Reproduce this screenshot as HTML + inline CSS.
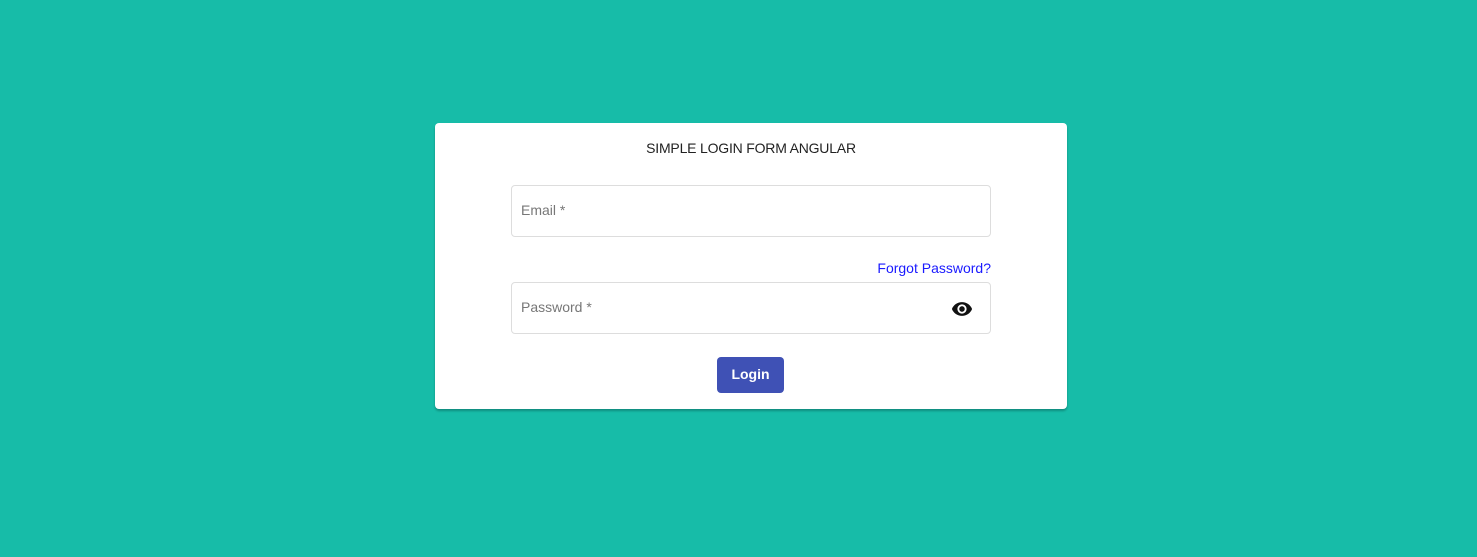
<!DOCTYPE html>
<html><head><style>
html,body{margin:0;padding:0;width:1477px;height:557px;background:#17bca8;font-family:"Liberation Sans",sans-serif;overflow:hidden}
.card{position:absolute;left:435px;top:123px;width:632px;height:286px;background:#fff;border-radius:4px;box-shadow:0 2px 2px rgba(0,0,0,.25)}
.title{position:absolute;top:17px;left:0;width:100%;text-align:center;font-size:14px;color:#222;letter-spacing:-0.2px}
.field{position:absolute;left:76px;width:478px;height:50px;border:1px solid #ddd;border-radius:4px}
.field span{position:absolute;left:9px;top:16px;font-size:14px;color:#777}
.forgot{position:absolute;right:76px;top:137px;font-size:14px;color:#1a1aff}
.btn{position:absolute;left:282px;top:234px;width:67px;height:36px;background:#3f51b5;border-radius:4px;color:#fff;font-weight:bold;font-size:14px;text-align:center;line-height:35px}
</style></head><body>
<div class="card">
<div class="title">SIMPLE LOGIN FORM ANGULAR</div>
<div class="field" style="top:62px"><span>Email *</span></div>
<div class="forgot">Forgot Password?</div>
<div class="field" style="top:159px"><span>Password *</span>
<svg style="position:absolute;left:439px;top:15px" width="22" height="22" viewBox="0 0 24 24"><path fill="#111" d="M12 4.5C7 4.5 2.73 7.61 1 12c1.73 4.39 6 7.5 11 7.5s9.270-3.11 11-7.5c-1.73-4.39-6-7.5-11-7.5zM12 17c-2.760 0-5-2.24-5-5s2.24-5 5-5 5 2.24 5 5-2.24 5-5 5zm0-8c-1.66 0-3 1.34-3 3s1.34 3 3 3 3-1.34 3-3-1.34-3-3-3z"/></svg>
</div>
<div class="btn">Login</div>
</div>
</body></html>
